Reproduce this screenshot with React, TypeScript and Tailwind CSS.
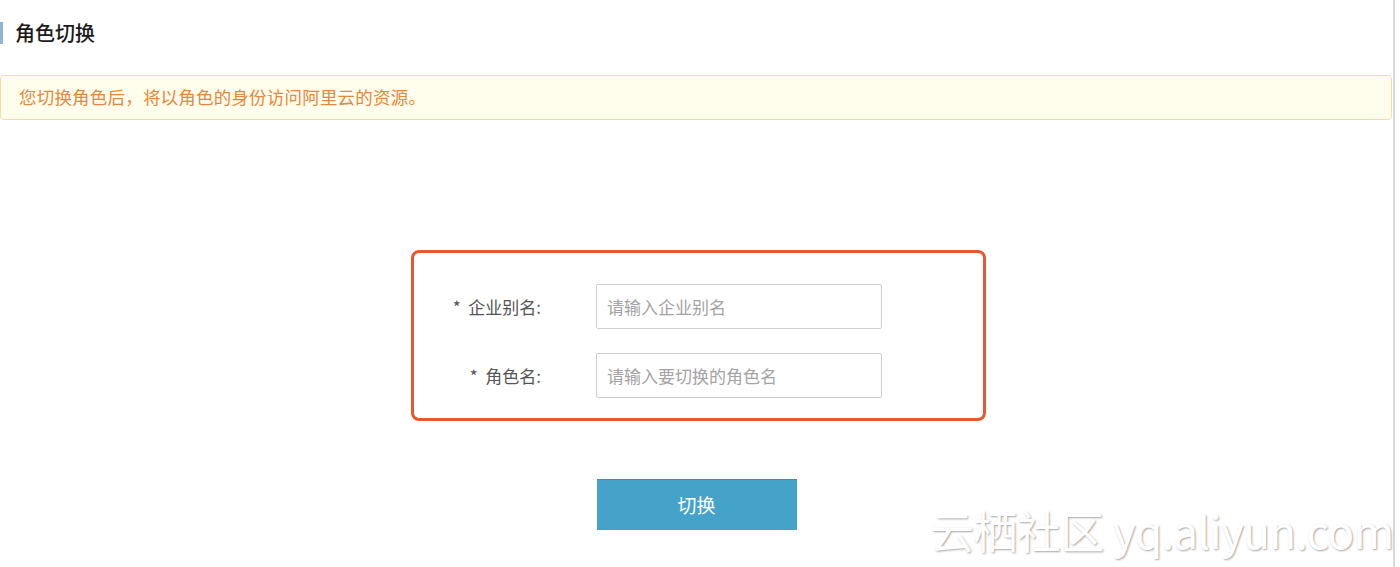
import React from 'react'

const font = { fontFamily: '"Noto Sans CJK SC", "Noto Sans", sans-serif' }

function Field({ label, placeholder }: { label: string; placeholder: string }) {
  return (
    <div className="flex items-center">
      <label className="w-[127px] text-right text-[17px] text-[#555]">
        *&nbsp;&nbsp;{label}:
      </label>
      <input
        className="ml-[55px] h-[45px] w-[286px] rounded-[2px] border border-[#cfcfcf] px-[10px] text-[17px] text-[#333] outline-none placeholder:text-[#a3a3a3]"
        placeholder={placeholder}
      />
    </div>
  )
}

export default function App() {
  return (
    <div className="relative h-[567px] w-[1400px] overflow-hidden bg-white" style={font}>
      <div className="h-full w-[1395px] border-r-2 border-[#d9d9d9]">
        <div className="flex items-center pt-[21px]">
          <div className="h-[22px] w-[3px] bg-[#8fb3d9]" />
          <h1 className="ml-[12px] text-[20px] font-medium leading-[24px] text-[#1a1a1a]">角色切换</h1>
        </div>

        <div className="mt-[30px] mr-[1px] flex h-[45px] items-center rounded-[4px] border border-[#f3deaa] bg-[#fffdeb] pl-[18px] text-[17.5px] tracking-[0.2px] text-[#e5883c]">
          您切换角色后，将以角色的身份访问阿里云的资源。
        </div>

        <div className="mt-[130px] flex flex-col items-center">
          <div className="ml-[4px] flex w-[575px] flex-col gap-[24px] rounded-[8px] border-[3px] border-[#e8572e] pb-[20px] pt-[31px]">
            <Field label="企业别名" placeholder="请输入企业别名" />
            <Field label="角色名" placeholder="请输入要切换的角色名" />
          </div>

          <button
            type="button"
            className="mt-[58px] h-[51px] w-[200px] border-t border-[#3a8db3] bg-[#45a2c9] text-[19px] text-white"
          >
            切换
          </button>
        </div>
      </div>

      <div
        className="pointer-events-none absolute left-[930px] top-[502px] whitespace-nowrap text-[44px] leading-[56px] tracking-[-0.6px] text-white"
        style={{ textShadow: '1px 1px 2px rgba(0,0,0,0.35)' }}
      >
        云栖社区 yq.aliyun.com
      </div>
    </div>
  )
}
